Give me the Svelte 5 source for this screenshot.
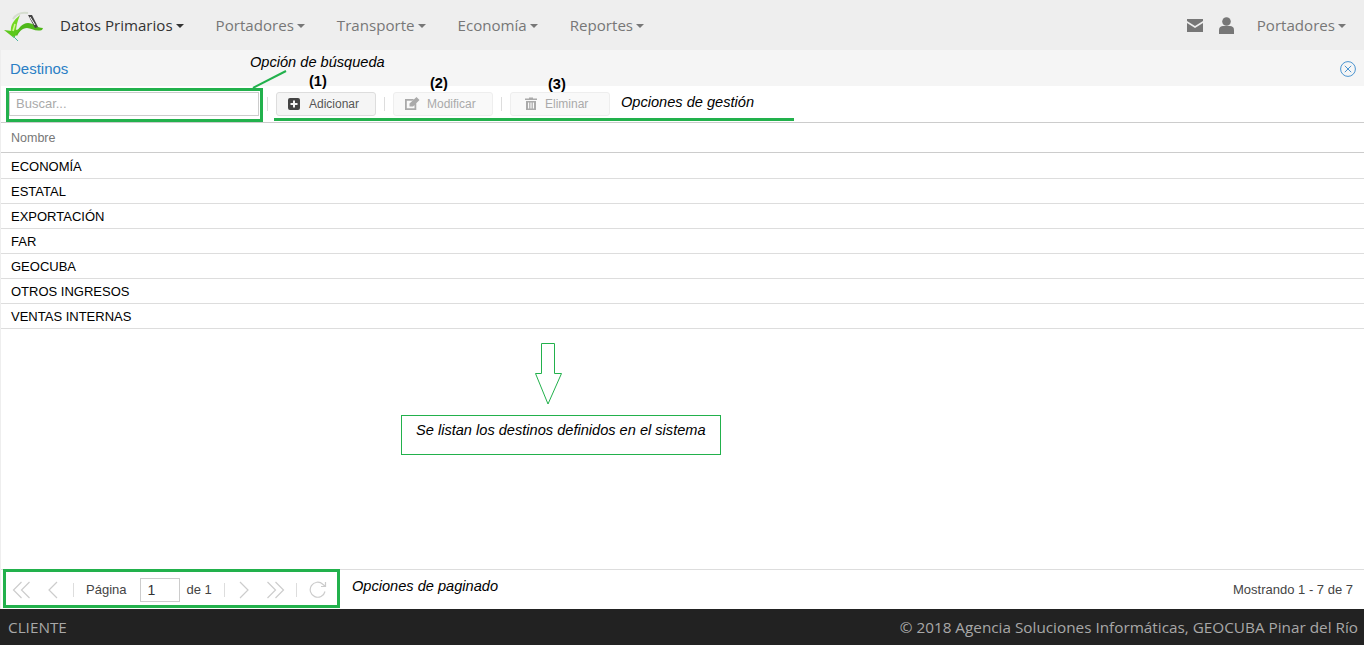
<script>
  const menus = [
    { label: 'Datos Primarios', active: true },
    { label: 'Portadores' },
    { label: 'Transporte' },
    { label: 'Economía' },
    { label: 'Reportes' }
  ];
  const rows = ['ECONOMÍA', 'ESTATAL', 'EXPORTACIÓN', 'FAR', 'GEOCUBA', 'OTROS INGRESOS', 'VENTAS INTERNAS'];
</script>

<div class="page">
  <nav class="navbar">
    <svg class="logo" width="42" height="42" viewBox="2 4 42 42">
      <path d="M13 19C17 13 22 12 28 13" fill="none" stroke="#d5ddcf" stroke-width="2"/>
      <path d="M11 32C10 25 14 20 20 15 17 22 16 27 16 32Z" fill="#74d822"/>
      <path d="M15 34C19 28 22 23 28 23 33 23 37 28 43 28L42 30C36 32 31 28 27 28 22 28 19 32 17 36Z" fill="#4fb81a"/>
      <path d="M4 30 12 31 20 29 14 38Z" fill="#5cc81c"/>
      <path d="M13 31 15 24" stroke="#d4f59a" stroke-width="1.500"/>
      <path d="M28 15 32 15 38 27 35 28Z" fill="#444"/>
      <path d="M30 17 35 25" stroke="#fff"/>
      <path d="M13 36 18 41" stroke="#4ab5a0"/>
    </svg>
    <ul class="menu">
      {#each menus as m}
        <li class:active={m.active}>{m.label}<span class="caret"></span></li>
      {/each}
    </ul>
    <div class="nav-right">
      <svg width="16" height="13" viewBox="0 0 16 13"><path d="M0 0H16V2L8 7 0 2Z M0 4 8 9 16 4V13H0Z" fill="#777"/></svg>
      <svg class="user" width="15" height="17" viewBox="0 0 15 17"><circle cx="7.500" cy="4.500" r="4.300" fill="#777"/><path d="M0 17V13C0 10 2 9 4 9H11C13 9 15 10 15 13V17Z" fill="#777"/></svg>
      <span class="nav-user">Portadores<span class="caret"></span></span>
    </div>
  </nav>

  <main class="panel">
    <header class="panel-head">
      <span class="panel-title">Destinos</span>
      <svg width="16" height="16" viewBox="0 0 16 16" fill="none" stroke="#4a94d0"><circle cx="8" cy="8" r="7.400"/><path d="M4.800 4.800 11.200 11.200M11.200 4.800 4.800 11.200"/></svg>
    </header>

    <div class="toolbar">
      <input class="search" placeholder="Buscar..." />
      <span class="sep"></span>
      <button class="btn">
        <svg width="12" height="12" viewBox="0 0 12 12"><path fill-rule="evenodd" d="M2 0H10A2 2 0 0 1 12 2V10A2 2 0 0 1 10 12H2A2 2 0 0 1 0 10V2A2 2 0 0 1 2 0ZM5 2.500V5H2.500V7H5V9.500H7V7H9.500V5H7V2.500Z" fill="#444"/></svg>
        Adicionar
      </button>
      <span class="sep"></span>
      <button class="btn off edit">
        <svg width="15" height="13" viewBox="0 0 15 13"><path d="M0 2H9L7.200 3.800H1.800V11.200H9.500V8L11.300 6.200V13H0Z M4.500 6.500 11.500 0 14.500 3 8 9.500H4.500Z" fill="#aaa"/></svg>
        Modificar
      </button>
      <span class="sep"></span>
      <button class="btn off trash">
        <svg width="12" height="13" viewBox="0 0 12 13"><path fill-rule="evenodd" d="M0 1.500H4V.5H8V1.500H12V3H0ZM1 4H11V13H1ZM3 5.500V11.500H4.200V5.500ZM5.400 5.500V11.500H6.600V5.500ZM7.800 5.500V11.500H9V5.500Z" fill="#aaa"/></svg>
        Eliminar
      </button>
    </div>

    <div class="table">
      <div class="th">Nombre</div>
      {#each rows as r}
        <div class="td">{r}</div>
      {/each}
    </div>

    <div class="pager">
      <div class="pager-left">
        <svg class="pg" width="20" height="18" viewBox="0 0 20 18"><path d="M9.500 1 1.500 9 9.500 17M17.500 1 9.500 9 17.500 17"/></svg>
        <svg class="pg prev" width="12" height="18" viewBox="0 0 12 18"><path d="M10 1 2 9 10 17"/></svg>
        <span class="sep short"></span>
        <span class="pg-label">Página</span>
        <span class="pg-input">1</span>
        <span class="pg-label de">de 1</span>
        <span class="sep short"></span>
        <svg class="pg next" width="12" height="18" viewBox="0 0 12 18"><path d="M2 1 10 9 2 17"/></svg>
        <svg class="pg last" width="20" height="18" viewBox="0 0 20 18"><path d="M1.500 1 9.500 9 1.500 17M9.500 1 17.500 9 9.500 17"/></svg>
        <span class="sep short"></span>
        <svg class="pg" width="18" height="18" viewBox="0 0 18 18"><path d="M16 10.500A7.500 7.500 0 1 1 13.800 3.200L16.500 5.500M16.500 1V5.500H12"/></svg>
      </div>
      <span class="pg-info">Mostrando 1 - 7 de 7</span>
    </div>
  </main>

  <footer class="footer">
    <span>CLIENTE</span>
    <span>© 2018 Agencia Soluciones Informáticas, GEOCUBA Pinar del Río</span>
  </footer>

  <!-- anotaciones sobre la captura -->
  <div class="mark search-mark"></div>
  <div class="mark pager-mark"></div>
  <div class="mark gestion-line"></div>
  <svg class="overlay" width="1364" height="645" viewBox="0 0 1364 645">
    <path d="M253 88 286 71" stroke="#22b14c" stroke-width="2" fill="none"/>
    <path d="M541.500 343.500H554.500V373.500H561.500L548 404 535.500 373.500H541.500Z" stroke="#22b14c" fill="#fff"/>
  </svg>
  <span class="note it" style="left:250px;top:54px">Opción de búsqueda</span>
  <span class="note bold" style="left:309px;top:73px">(1)</span>
  <span class="note bold" style="left:430px;top:75px">(2)</span>
  <span class="note bold" style="left:548px;top:76px">(3)</span>
  <span class="note it" style="left:621px;top:94px">Opciones de gestión</span>
  <span class="note it" style="left:352px;top:578px">Opciones de paginado</span>
  <div class="note-box">Se listan los destinos definidos en el sistema</div>
</div>

<style>
  :global(body) {
    margin: 0;
    background: #fff;
  }

  .page {
    position: relative;
    width: 1364px;
    height: 645px;
    overflow: hidden;
    display: flex;
    flex-direction: column;
    font-family: "Liberation Sans", Arial, sans-serif;
    font-size: 13px;
    color: #333;
  }

  .navbar {
    height: 50px;
    flex: none;
    background: #eee;
    display: flex;
    align-items: center;
    font-family: "Open Sans", sans-serif;
    font-size: 15.100px;
    color: #777;
  }

  .logo {
    margin-left: 2px;
    flex: none;
  }

  .menu {
    display: flex;
    list-style: none;
    margin: 0 0 0 16px;
    padding: 0;
    gap: 32px;
  }

  .menu li.active {
    color: #333;
  }

  .caret {
    display: inline-block;
    vertical-align: 3px;
    margin-left: 3px;
    border-top: 4px solid currentColor;
    border-left: 4px solid transparent;
    border-right: 4px solid transparent;
  }

  .nav-right {
    margin-left: auto;
    padding-right: 18px;
    display: flex;
    align-items: center;
  }

  .user {
    margin-left: 16px;
  }

  .nav-user {
    margin-left: 23px;
  }

  .panel {
    flex: 1;
    display: flex;
    flex-direction: column;
    min-height: 0;
    border-left: 1px solid #eee;
  }

  .panel-head {
    height: 36px;
    flex: none;
    background: #f5f5f5;
    display: flex;
    align-items: center;
    justify-content: space-between;
    padding: 1px 8px 0 9px;
    box-sizing: border-box;
  }

  .panel-title {
    font-size: 15px;
    color: #2a7fc5;
  }

  .toolbar {
    height: 37px;
    flex: none;
    box-sizing: border-box;
    border-bottom: 1px solid #ccc;
    display: flex;
    align-items: center;
    padding: 0 0 1px 8px;
  }

  .search {
    width: 250px;
    height: 24px;
    box-sizing: border-box;
    border: 1px solid #ccc;
    padding: 0 6px;
    font: 13px "Liberation Sans", Arial, sans-serif;
    outline: none;
  }

  .search::placeholder {
    color: #aaa;
  }

  .sep {
    width: 1px;
    height: 14px;
    background: #ddd;
    margin: 0 8px;
    flex: none;
  }

  .btn {
    width: 100px;
    height: 24px;
    box-sizing: border-box;
    display: flex;
    align-items: center;
    gap: 9px;
    border: 1px solid #ddd;
    border-radius: 3px;
    background: #f5f5f5;
    color: #555;
    font: 12px "Liberation Sans", Arial, sans-serif;
    padding: 0 0 0 11px;
  }

  .btn.off {
    background: #f9f9f9;
    border-color: #eee;
    color: #aaa;
  }

  .btn.edit {
    gap: 7px;
  }

  .btn.trash {
    padding-left: 14px;
    gap: 8px;
  }

  .table {
    flex: 1;
    min-height: 0;
  }

  .th {
    height: 30px;
    box-sizing: border-box;
    border-bottom: 1px solid #ccc;
    padding: 0 10px;
    line-height: 30px;
    font-size: 12.500px;
    color: #777;
    margin-bottom: 1px;
  }

  .td {
    height: 25px;
    box-sizing: border-box;
    border-bottom: 1px solid #ddd;
    padding: 0 10px;
    line-height: 25px;
    color: #000;
  }

  .pager {
    height: 40px;
    flex: none;
    box-sizing: border-box;
    border-top: 1px solid #ddd;
    display: flex;
    align-items: center;
    justify-content: space-between;
    padding: 0 11px;
  }

  .pager-left {
    display: flex;
    align-items: center;
  }

  .pager-left .sep {
    margin: 0 12px;
  }

  .pg {
    fill: none;
    stroke: #ccc;
    stroke-width: 1.200;
  }

  .prev {
    margin-left: 15px;
    margin-right: 2px;
  }

  .next {
    margin-left: 1px;
  }

  .last {
    margin-left: 16px;
    margin-right: -2px;
  }

  .pg-label {
    color: #444;
  }

  .de {
    margin-left: 6px;
  }

  .pg-input {
    width: 40px;
    height: 24px;
    box-sizing: border-box;
    border: 1px solid #ccc;
    line-height: 22px;
    padding-left: 6px;
    font-size: 14px;
    margin-left: 14px;
  }

  .pg-info {
    color: #444;
  }

  .footer {
    height: 36px;
    flex: none;
    background: #222;
    color: #a8a8a8;
    display: flex;
    align-items: center;
    justify-content: space-between;
    padding: 0 6px 0 8px;
    font-family: "Open Sans", sans-serif;
    font-size: 15.300px;
  }

  .mark {
    position: absolute;
    box-sizing: border-box;
    border: 3px solid #22b14c;
  }

  .search-mark {
    left: 6px;
    top: 88px;
    width: 257px;
    height: 34px;
  }

  .pager-mark {
    left: 3px;
    top: 569px;
    width: 337px;
    height: 39px;
  }

  .gestion-line {
    left: 274px;
    top: 118px;
    width: 520px;
    height: 3px;
    border: none;
    background: #22b14c;
  }

  .overlay {
    position: absolute;
    left: 0;
    top: 0;
    pointer-events: none;
  }

  .note {
    position: absolute;
    font-size: 14.600px;
    line-height: 16px;
    color: #000;
    white-space: nowrap;
  }

  .it {
    font-style: italic;
  }

  .bold {
    font-weight: bold;
  }

  .note-box {
    position: absolute;
    left: 401px;
    top: 415px;
    width: 320px;
    height: 40px;
    box-sizing: border-box;
    border: 1px solid #22b14c;
    padding: 6px 0 0 14px;
    background: #fff;
    font-size: 14.600px;
    line-height: 16px;
    font-style: italic;
    color: #000;
  }
</style>
